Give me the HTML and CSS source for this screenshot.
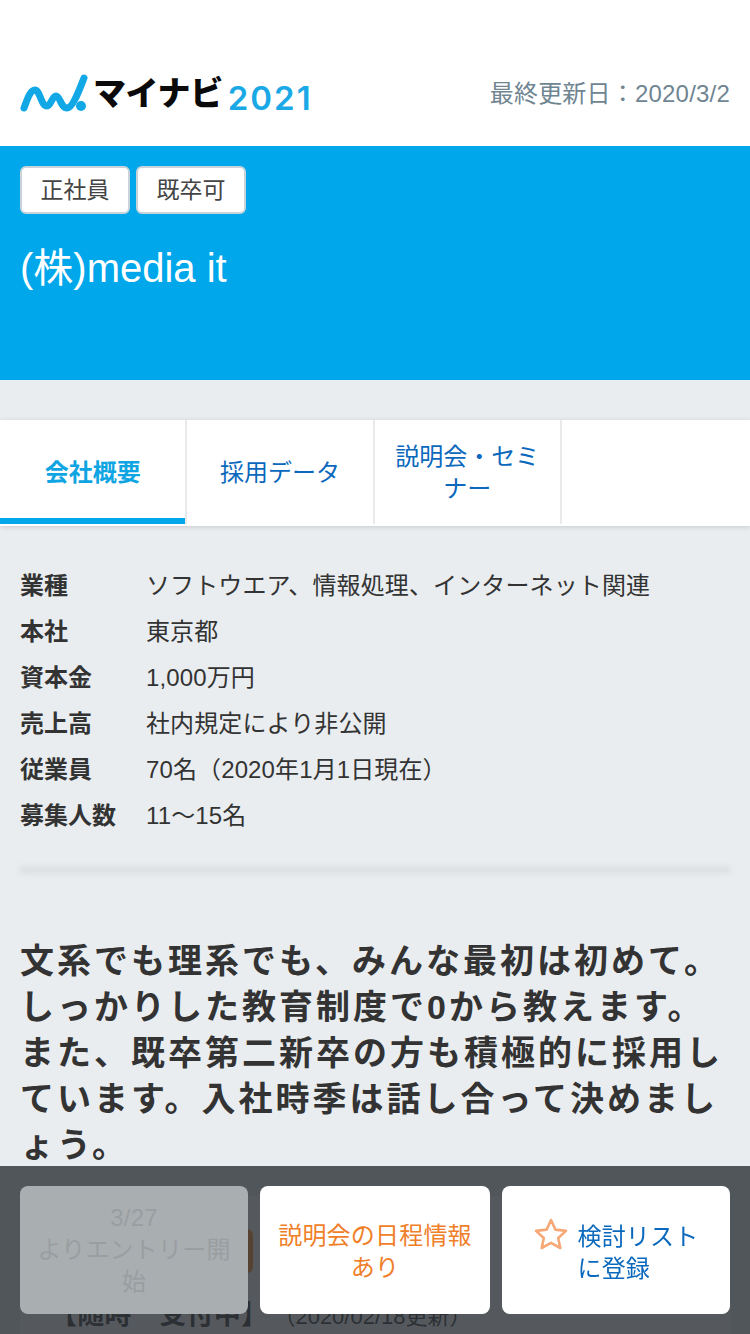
FILE: index.html
```html
<!DOCTYPE html>
<html lang="ja">
<head>
  <meta charset="UTF-8" />
  <meta name="viewport" content="width=device-width, initial-scale=1.0"/>
  <title>(株)media it | マイナビ2021</title>
  <link rel="stylesheet" href="styles.css">
</head>
<body>

  <!-- Logo bar -->
  <header class="site-header">
    <div class="logo">
      <svg class="logo-mark" width="68" height="42" viewBox="0 0 68 42">
        <path d="M4 35 C7 27 10 17 15 17 C20 17 21 33 27 33 C31 33 32 23 36 23 C40 23 41 35 47 35 C53 35 60 15 64 5" fill="none" stroke="#12a8e6" stroke-width="7" stroke-linecap="round" stroke-linejoin="round"/>
        <circle cx="61" cy="33" r="5" fill="#12a8e6"/>
      </svg>
      <span class="logo-name">マイナビ</span>
      <span class="logo-year">2021</span>
    </div>
    <p class="updated">最終更新日：2020/3/2</p>
  </header>

  <!-- Company title -->
  <section class="hero">
    <div class="tags">
      <span class="tag">正社員</span>
      <span class="tag">既卒可</span>
    </div>
    <h1 class="company">(株)media it</h1>
  </section>

  <!-- Tabs -->
  <nav class="tabs">
    <a class="tab tab-active">会社概要</a>
    <a class="tab">採用データ</a>
    <a class="tab">説明会・セミナー</a>
    <span class="tab tab-empty"></span>
  </nav>

  <main class="content">
    <dl class="facts">
      <div class="fact"><dt>業種</dt><dd>ソフトウエア、情報処理、インターネット関連</dd></div>
      <div class="fact"><dt>本社</dt><dd>東京都</dd></div>
      <div class="fact"><dt>資本金</dt><dd>1,000万円</dd></div>
      <div class="fact"><dt>売上高</dt><dd>社内規定により非公開</dd></div>
      <div class="fact"><dt>従業員</dt><dd>70名（2020年1月1日現在）</dd></div>
      <div class="fact"><dt>募集人数</dt><dd>11～15名</dd></div>
    </dl>

    <hr class="divider">

    <h2 class="catch">文系でも理系でも、みんな最初は初めて。<br>しっかりした教育制度で0から教えます。<br>また、既卒第二新卒の方も積極的に採用しています。入社時季は話し合って決めましょう。</h2>

    <div class="entry-card">
      <div class="entry-badge"></div>
      <p class="entry-status"><b>【随時　受付中】</b><span>（2020/02/18更新）</span></p>
    </div>
  </main>

  <!-- Fixed action bar -->
  <div class="action-bar">
    <button class="action action-disabled">3/27<br>よりエントリー開始</button>
    <button class="action action-orange">説明会の日程情報あり</button>
    <button class="action action-blue">
      <svg class="star" width="36" height="34" viewBox="0 0 36 34">
        <path d="M18 3 L22.4 12.6 L33 13.9 L25.2 21 L27.3 31 L18 25.9 L8.7 31 L10.8 21 L3 13.9 L13.6 12.6 Z" fill="none" stroke="#f6a877" stroke-width="2.6" stroke-linejoin="round"/>
      </svg>
      <span class="action-label">検討リスト<br>に登録</span>
    </button>
  </div>

</body>
</html>
```

FILE: styles.css
```css
* {
  box-sizing: border-box;
}

html, body {
  margin: 0;
  padding: 0;
  height: 1334px;
  overflow: hidden;
}

body {
  font-family: "Liberation Sans", "Noto Sans CJK JP", sans-serif;
  background: #e9edf0;
  color: #333;
}

.site-header {
  height: 146px;
  background: #fff;
  padding: 72px 20px 0;
  display: flex;
  justify-content: space-between;
  align-items: flex-start;
}

.logo {
  display: flex;
  align-items: center;
  height: 44px;
}

.logo-mark {
  margin-right: 5px;
}

.logo-name {
  font-size: 33px;
  font-weight: 900;
  color: #0a0a0a;
  letter-spacing: -0.4px;
  line-height: 44px;
}

.logo-year {
  font-family: "Inter", sans-serif;
  font-size: 33px;
  font-weight: 600;
  color: #1aa9e6;
  letter-spacing: 2px;
  margin-left: 5px;
  margin-top: 8px;
  line-height: 44px;
}

.updated {
  margin: 6px 0 0;
  font-size: 24px;
  line-height: 32px;
  letter-spacing: 0.2px;
  color: #6f8592;
}

.hero {
  height: 234px;
  background: #00a7ea;
  padding: 20px 20px 0;
}

.tags {
  display: flex;
  gap: 6px;
}

.tag {
  width: 110px;
  height: 48px;
  background: #fff;
  border: 2px solid #c9d3da;
  border-radius: 6px;
  font-size: 23px;
  line-height: 44px;
  text-align: center;
  color: #444;
}

.company {
  margin: 27px 0 0;
  font-size: 40px;
  line-height: 54px;
  font-weight: 400;
  color: #fff;
}

.tabs {
  display: flex;
  height: 106px;
  margin-top: 40px;
  background: #fff;
  box-shadow: 0 1px 5px rgba(0, 0, 0, 0.15);
}

.tab {
  width: 187.3px;
  height: 104px;
  padding: 2px 14px 0;
  border-right: 2px solid #e8eaec;
  display: flex;
  align-items: center;
  justify-content: center;
  text-align: center;
  font-size: 24px;
  line-height: 32px;
  color: #0a68bd;
}

.tab-active {
  font-weight: 700;
  color: #0fa5e2;
  box-shadow: inset 0 -6px 0 #00a7ea;
}

.tab-empty {
  flex: 1;
  border-right: 0;
}

.content {
  padding: 34px 20px 0;
}

.facts {
  margin: 0;
}

.fact {
  display: flex;
  height: 46px;
  align-items: center;
  font-size: 24px;
}

.fact dt {
  width: 126px;
  font-weight: 700;
}

.fact dd {
  margin: 0;
  letter-spacing: 0.12px;
}

.divider {
  height: 8px;
  margin: 30px 0 0;
  border: 0;
  background: #dde1e4;
  filter: blur(2px);
}

.catch {
  margin: 64px 0 0;
  font-size: 34px;
  line-height: 46px;
  font-weight: 700;
  letter-spacing: 3px;
  color: #333;
}

.entry-card {
  margin-top: 28px;
  background: #fff;
  padding: 33px 0 0 30px;
  height: 200px;
}

.entry-badge {
  width: 203px;
  height: 44px;
  border-radius: 0 6px 6px 0;
  background: #ff8a1e;
}

.entry-status {
  margin: 24px 0 0;
  font-size: 22px;
  line-height: 36px;
  color: #333;
}

.entry-status b {
  font-size: 27px;
  letter-spacing: 0.3px;
  margin-right: 16px;
}

.action-bar {
  position: fixed;
  left: 0;
  right: 0;
  bottom: 0;
  height: 168px;
  padding: 20px;
  display: flex;
  gap: 12px;
  background: rgba(42, 48, 52, 0.8);
}

.action {
  flex: 228;
  height: 128px;
  border: 0;
  border-radius: 8px;
  background: #fff;
  font-family: inherit;
  font-size: 24px;
  line-height: 32px;
  padding: 0 14px;
  letter-spacing: 0.2px;
}

.action-disabled {
  background: #a9aeb1;
  color: #999ea1;
}

.action-orange {
  flex: 230;
  color: #f07f2a;
  padding-top: 4px;
}

.action-blue {
  color: #0a68bd;
  display: flex;
  align-items: center;
  justify-content: center;
  gap: 8px;
  text-align: left;
}

.star {
  margin-bottom: 32px;
}

.action-label {
  padding-top: 6px;
}
```
